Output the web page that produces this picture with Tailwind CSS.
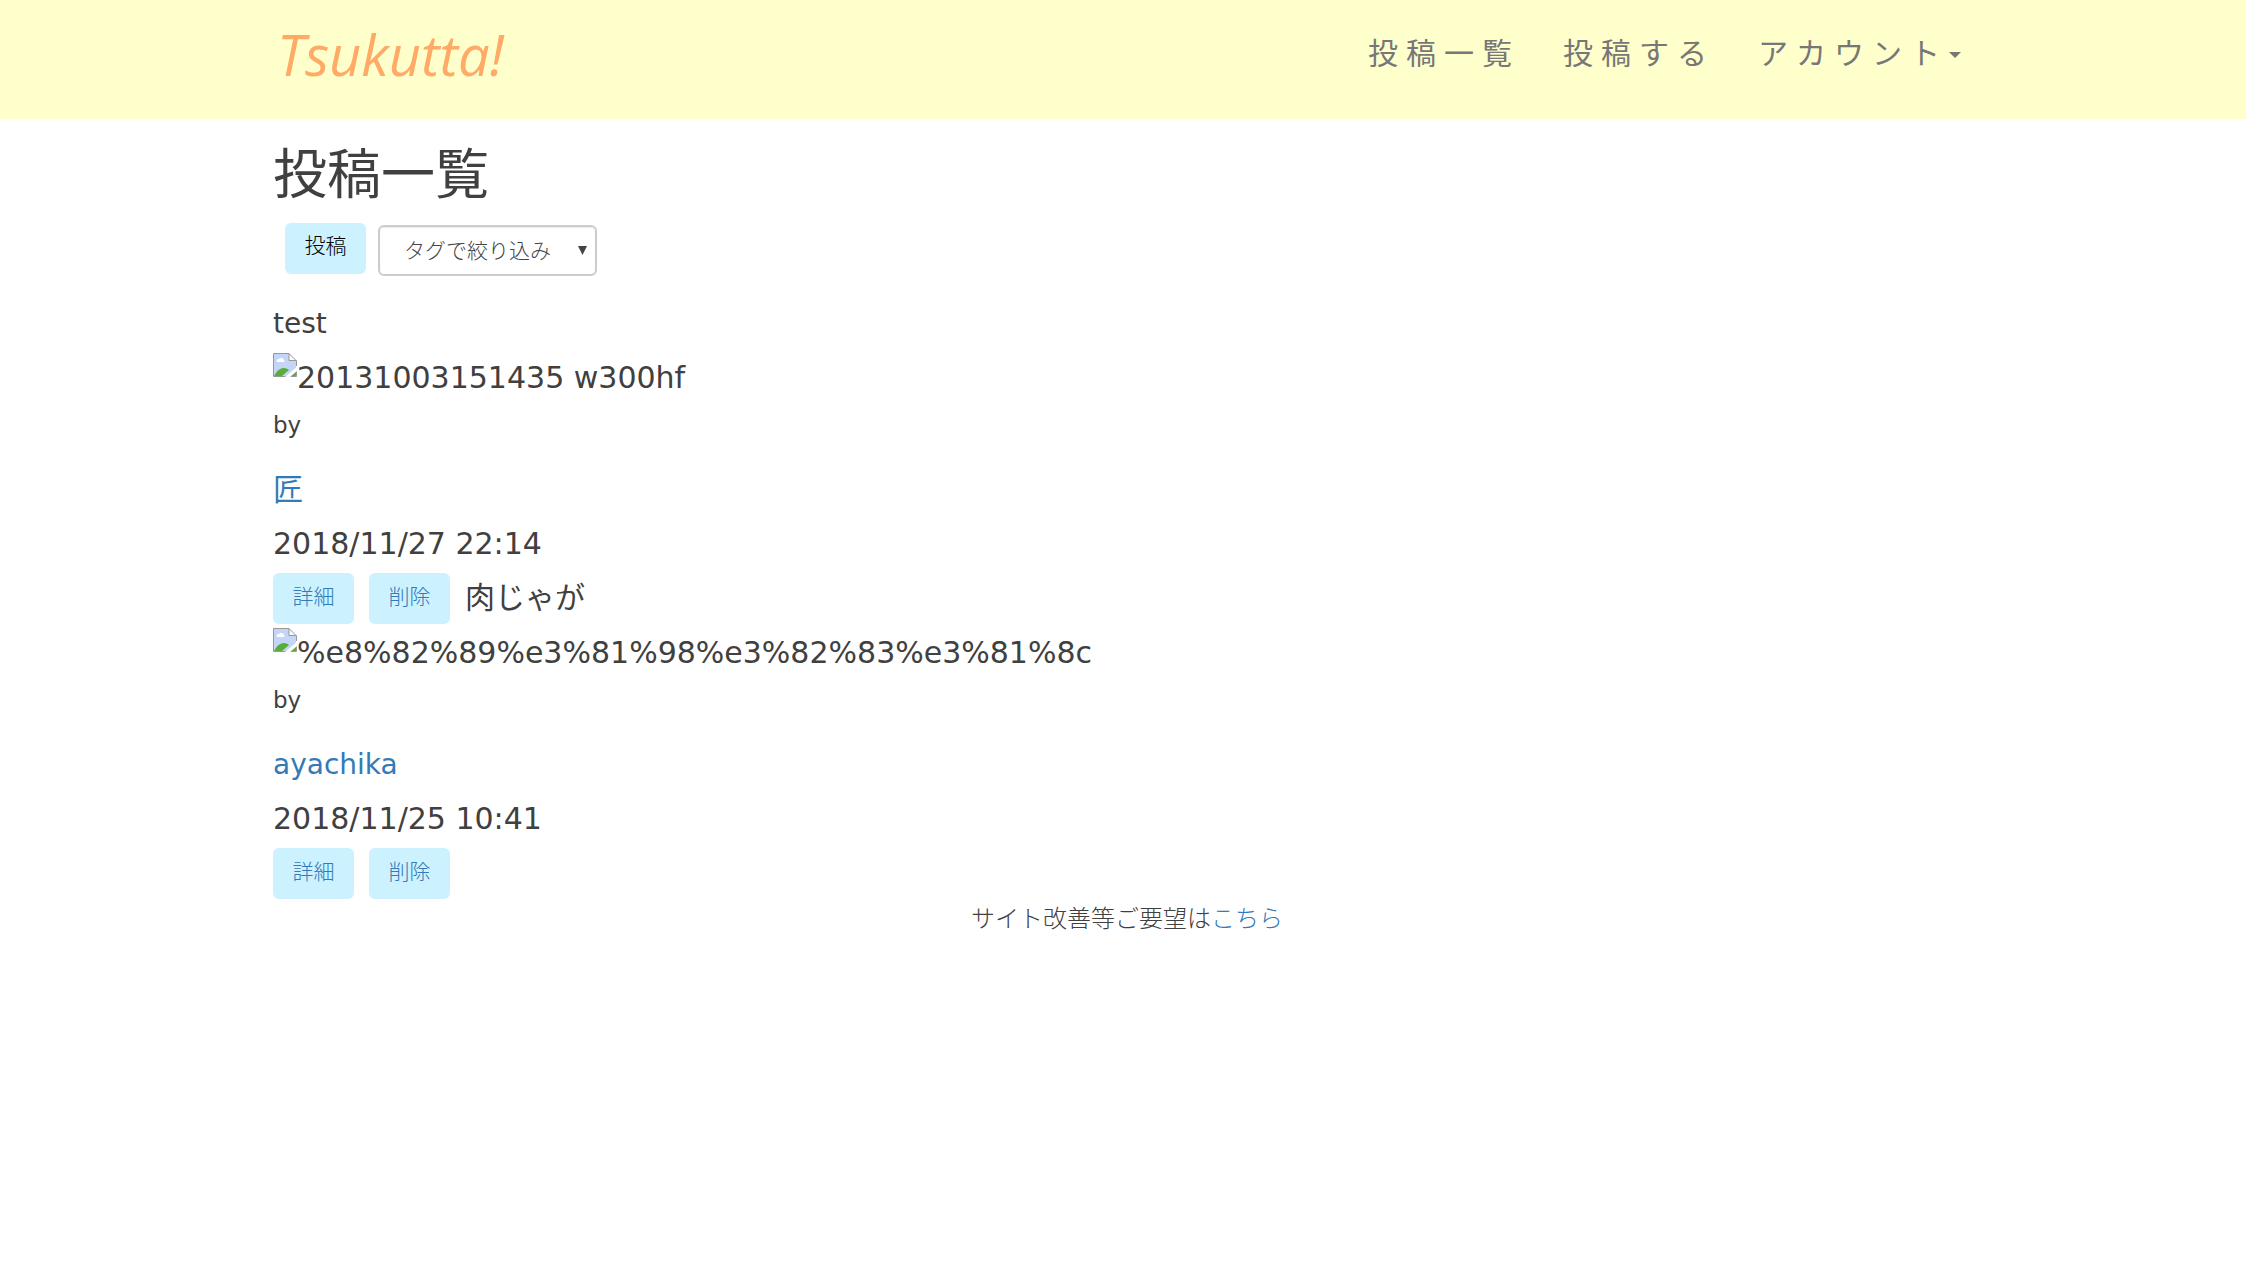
<!DOCTYPE html>
<html lang="ja">

<head>
    <meta charset="UTF-8">
    <meta name="viewport" content="width=device-width, initial-scale=1.0">
    <title>Tsukutta!</title>
    <script src="https://cdn.jsdelivr.net/npm/@tailwindcss/browser@4"></script>
    <style>
        body {
            font-family: 'Noto Sans', 'Noto Sans CJK JP', sans-serif;
        }

        article {
            font-family: 'DejaVu Sans', 'Noto Sans CJK JP', sans-serif;
        }

        .logo {
            font-family: 'Open Sans', sans-serif;
        }
    </style>
</head>

<body class="bg-white text-[#404040]">
    <!-- Navbar -->
    <header class="bg-[#ffffcc]">
        <div class="max-w-[1700px] mx-auto flex justify-between items-start pb-[33px]">
            <a href="#" class="logo italic text-[56px] leading-[64px] pt-[22px] pl-1 text-[#ffaa66]">Tsukutta!</a>
            <nav class="flex gap-[43px] pt-8 pr-3 text-[30px] leading-[42px] text-[#777777]">
                <a href="#" class="tracking-[8px]">投稿一覧</a>
                <a href="#" class="tracking-[8px]">投稿する</a>
                <a href="#" class="flex items-center"><span class="tracking-[8px]">アカウント</span>
                    <svg class="mt-1 ml-px" width="12" height="6" viewBox="0 0 12 6" fill="currentColor">
                        <path d="M0 0h12L6 6z" />
                    </svg>
                </a>
            </nav>
        </div>
    </header>

    <main class="max-w-[1700px] mx-auto">
        <h1 class="text-[54px] leading-[60px] pt-6">投稿一覧</h1>

        <!-- Post button and tag filter -->
        <div class="flex gap-3 pl-3 pt-5 pb-5">
            <button type="button"
                class="w-[81px] h-[51px] pb-[6px] rounded-md bg-[#ccf2ff] text-[21px] text-black font-light">投稿</button>
            <div class="relative mt-[2px]">
                <select aria-label="タグで絞り込み"
                    class="appearance-none w-[219px] h-[51px] pl-6 border-2 border-[#cccccc] rounded-md bg-white text-[21px] font-light text-[#444444] shadow-[inset_0_1px_1px_rgba(0,0,0,0.08)]">
                    <option>タグで絞り込み</option>
                </select>
                <svg class="absolute right-[10px] top-[21px] pointer-events-none" width="9" height="9"
                    viewBox="0 0 9 9" fill="#444444">
                    <path d="M0 0h9L4.500 9z" />
                </svg>
            </div>
        </div>

        <!-- Posts -->
        <article class="pt-px text-[30px] leading-[54px]">
            <h2 class="text-[28px]">test</h2>
            <div class="flex">
                <svg class="mt-[2px] shrink-0" width="24" height="24" viewBox="0 0 24 24">
                    <path d="M1 1h15l7 7v7L14 23H1z" fill="#c4d5f5" />
                    <path d="M4 9a2 2 0 0 1 2-3a3 3 0 0 1 5 1a1.500 1.500 0 0 1 0 2z" fill="#fff" />
                    <path d="M1 23c3-6 7-8 10-8 2 0 4 1 5 2l-7 6z" fill="#5aad38" />
                    <path d="M17 23l6-5v5z" fill="#5aad38" />
                    <path d="M16 1v7h7z" fill="#fff" />
                    <path d="M13 23.500H.5V.5H16l7.500 7.500v5M16 .5V7.500h7.500M23.500 18v5.500H17" fill="none"
                        stroke="#999" />
                    <path d="M12 24L24 14v4l-7 6z" fill="#fff" />
                </svg>
                <span>20131003151435 w300hf</span>
            </div>
            <p class="text-[23px] leading-[40px] mb-[18px]">by</p>
            <a href="#" class="block w-fit text-[#337ab7]">匠</a>
            <p>2018/11/27 22:14</p>
        </article>
        <div class="flex gap-[15px] pt-[2px] pb-px">
            <a href="#"
                class="w-[81px] h-[51px] text-center rounded-md bg-[#ccf2ff] text-[21px] leading-[46px] font-light text-[#337ab7]">詳細</a>
            <a href="#"
                class="w-[81px] h-[51px] text-center rounded-md bg-[#ccf2ff] text-[21px] leading-[46px] font-light text-[#337ab7]">削除</a>
            <h2 class="text-[30px] leading-[48px]">肉じゃが</h2>
        </div>

        <article class="pt-px text-[30px] leading-[54px]">
            <div class="flex">
                <svg class="mt-[2px] shrink-0" width="24" height="24" viewBox="0 0 24 24">
                    <path d="M1 1h15l7 7v7L14 23H1z" fill="#c4d5f5" />
                    <path d="M4 9a2 2 0 0 1 2-3a3 3 0 0 1 5 1a1.500 1.500 0 0 1 0 2z" fill="#fff" />
                    <path d="M1 23c3-6 7-8 10-8 2 0 4 1 5 2l-7 6z" fill="#5aad38" />
                    <path d="M17 23l6-5v5z" fill="#5aad38" />
                    <path d="M16 1v7h7z" fill="#fff" />
                    <path d="M13 23.500H.5V.5H16l7.500 7.500v5M16 .5V7.500h7.500M23.500 18v5.500H17" fill="none"
                        stroke="#999" />
                    <path d="M12 24L24 14v4l-7 6z" fill="#fff" />
                </svg>
                <span>%e8%82%89%e3%81%98%e3%82%83%e3%81%8c</span>
            </div>
            <p class="text-[23px] leading-[40px] mb-[18px]">by</p>
            <a href="#" class="block w-fit text-[28px] text-[#337ab7]">ayachika</a>
            <p>2018/11/25 10:41</p>
        </article>
        <div class="flex gap-[15px] pt-[2px] pb-px">
            <a href="#"
                class="w-[81px] h-[51px] text-center rounded-md bg-[#ccf2ff] text-[21px] leading-[46px] font-light text-[#337ab7]">詳細</a>
            <a href="#"
                class="w-[81px] h-[51px] text-center rounded-md bg-[#ccf2ff] text-[21px] leading-[46px] font-light text-[#337ab7]">削除</a>
        </div>
    </main>

    <footer class="pl-2 text-center text-[24px] leading-[36px] font-light">
        サイト改善等ご要望は<a href="#" class="text-[#337ab7]">こちら</a>
    </footer>
</body>

</html>
